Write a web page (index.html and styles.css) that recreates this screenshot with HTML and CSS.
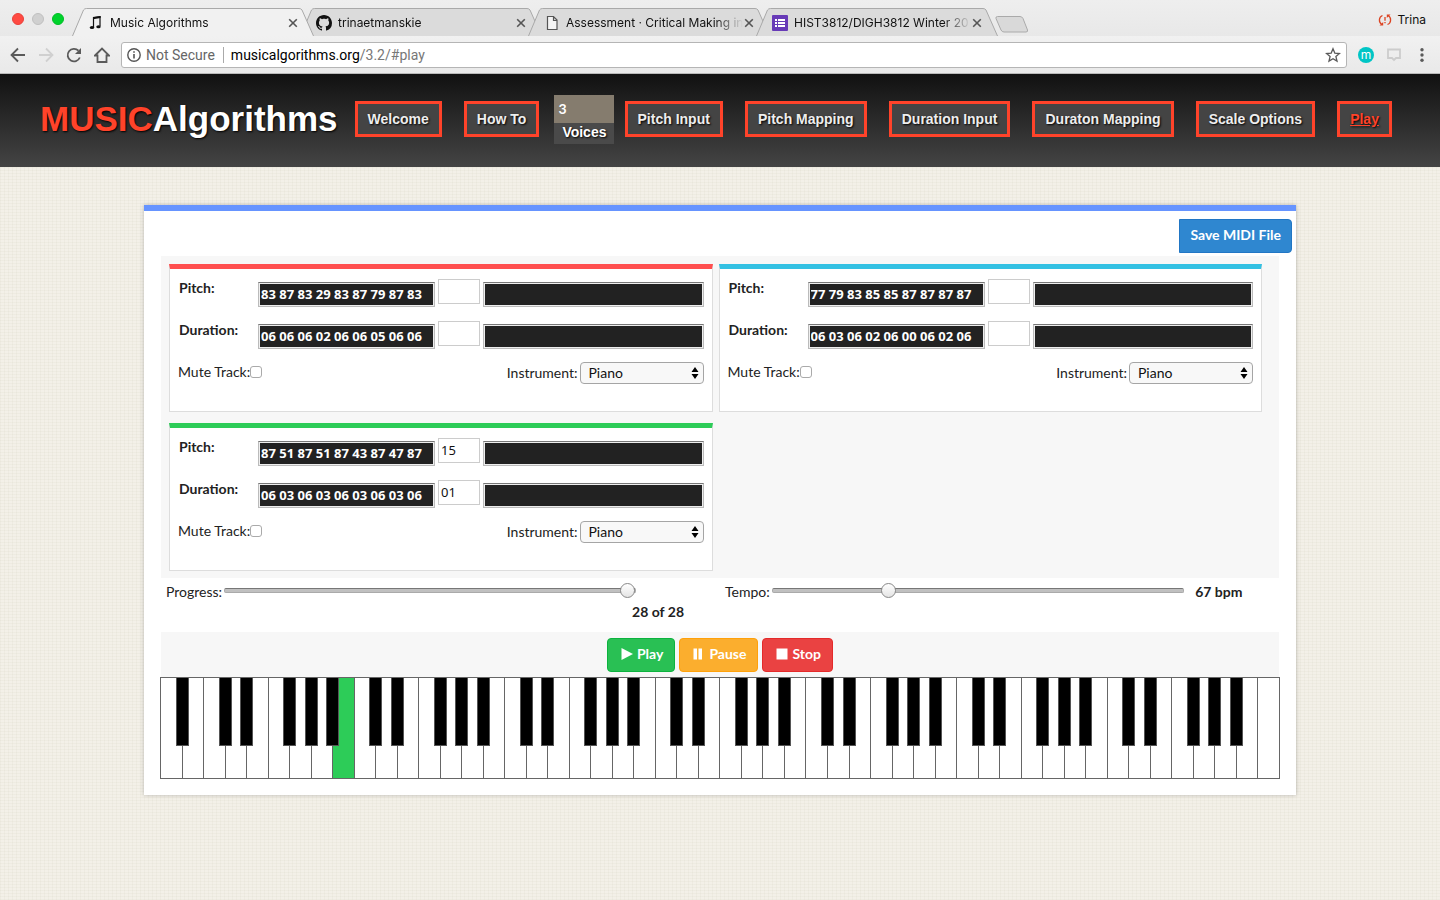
FILE: index.html
```html
<!DOCTYPE html>
<html lang="en">
<head>
<meta charset="utf-8">
<title>Music Algorithms</title>
<link rel="stylesheet" href="styles.css">
</head>
<body>
<div class="browser">
  <div class="tabstrip">
    <div class="lights"><span class="light light-red"></span><span class="light light-gray"></span><span class="light light-green"></span></div>
    <div class="tabs">
      <div class="tab tab-active">
        <svg class="tab-shape" viewBox="0 0 242 28" preserveAspectRatio="none"><path d="M0.500 28L11.500 2Q12.500 .5 14.500 .5H227Q229 .5 230 2L241.500 28"/></svg>
        <svg class="tab-icon" viewBox="0 0 16 16"><path d="M5.500 12V2.600l6.500-1V11" fill="none" stroke="#111" stroke-width="1.200"/><path d="M5 2.300l7.600-1.300v2L5 4.300z" fill="#111"/><ellipse cx="4" cy="12.600" rx="2.200" ry="1.500" fill="#111"/><ellipse cx="10.500" cy="11.800" rx="2.200" ry="1.500" fill="#111"/></svg>
        <span class="tab-title">Music Algorithms</span>
        <button class="tab-close" aria-label="Close tab"><svg viewBox="0 0 10 10"><path d="M1.200 1.200l7.600 7.600M8.800 1.200L1.200 8.800"/></svg></button>
      </div>
      <div class="tab">
        <svg class="tab-shape" viewBox="0 0 242 28" preserveAspectRatio="none"><path d="M0.500 28L11.500 2Q12.500 .5 14.500 .5H227Q229 .5 230 2L241.500 28"/></svg>
        <svg class="tab-icon" viewBox="0 0 16 16"><path fill="#111" fill-rule="evenodd" d="M8 0C3.580 0 0 3.580 0 8c0 3.540 2.290 6.530 5.470 7.590.4.070.55-.17.55-.38 0-.19-.01-.82-.01-1.490-2.010.37-2.530-.49-2.690-.94-.09-.23-.48-.94-.82-1.130-.28-.15-.68-.52-.01-.53.63-.01 1.080.58 1.230.82.72 1.210 1.870.87 2.330.66.070-.52.28-.87.51-1.070-1.780-.2-3.640-.89-3.640-3.950 0-.87.31-1.590.82-2.150-.08-.2-.36-1.020.08-2.120 0 0 .67-.21 2.200.82.64-.18 1.320-.27 2-.27s1.360.09 2 .27c1.530-1.040 2.200-.82 2.200-.82.44 1.100.16 1.920.08 2.120.51.56.82 1.270.82 2.150 0 3.070-1.870 3.750-3.650 3.950.29.25.54.73.54 1.480 0 1.070-.01 1.930-.01 2.200 0 .21.15.46.55.38A8.010 8.010 0 0016 8c0-4.420-3.580-8-8-8z"/></svg>
        <span class="tab-title">trinaetmanskie</span>
        <button class="tab-close" aria-label="Close tab"><svg viewBox="0 0 10 10"><path d="M1.200 1.200l7.600 7.600M8.800 1.200L1.200 8.800"/></svg></button>
      </div>
      <div class="tab">
        <svg class="tab-shape" viewBox="0 0 242 28" preserveAspectRatio="none"><path d="M0.500 28L11.500 2Q12.500 .5 14.500 .5H227Q229 .5 230 2L241.500 28"/></svg>
        <svg class="tab-icon" viewBox="0 0 16 16"><path d="M3.500 1.500h6l3.500 3.500v9.500H3.500zM9.500 1.500v4h3.500" fill="#f4f4f4" stroke="#555" stroke-width="1.200"/></svg>
        <span class="tab-title">Assessment · Critical Making in</span>
        <button class="tab-close" aria-label="Close tab"><svg viewBox="0 0 10 10"><path d="M1.200 1.200l7.600 7.600M8.800 1.200L1.200 8.800"/></svg></button>
      </div>
      <div class="tab">
        <svg class="tab-shape" viewBox="0 0 242 28" preserveAspectRatio="none"><path d="M0.500 28L11.500 2Q12.500 .5 14.500 .5H227Q229 .5 230 2L241.500 28"/></svg>
        <svg class="tab-icon" viewBox="0 0 16 16"><rect width="16" height="16" rx="1" fill="#673ab7"/><path d="M3 4h2v2H3zM6 4h7v2H6zM3 7h2v2H3zM6 7h7v2H6zM3 10h2v2H3zM6 10h7v2H6z" fill="#fff"/></svg>
        <span class="tab-title">HIST3812/DIGH3812 Winter 20</span>
        <button class="tab-close" aria-label="Close tab"><svg viewBox="0 0 10 10"><path d="M1.200 1.200l7.600 7.600M8.800 1.200L1.200 8.800"/></svg></button>
      </div>
      <button class="new-tab" aria-label="New tab"><svg viewBox="0 0 34 17"><path d="M2.500 .5H25Q27 .5 28 2.500L32.500 14Q33 16 31 16H9Q7 16 6 14L1 2.500Q.5 .5 2.500 .5z" fill="#d9d9d9" stroke="#aaa"/></svg></button>
    </div>
    <button class="profile"><svg viewBox="0 0 14 12"><g fill="none" stroke="#dc4423" stroke-width="1.300"><path d="M4.500 1.500C.5 3 .5 8.500 3.800 10.500M9.500 10.500C13.500 9 13.500 3.500 10.200 1.500"/><path d="M7 3v3.800M7 8v1.300"/></g><path d="M1.500 11.500h3.700V8zM12.500 .5H8.800V4z" fill="#dc4423"/></svg>Trina</button>
  </div>
  <div class="toolbar">
    <button class="tool" aria-label="Back"><svg viewBox="0 0 16 16"><path d="M15 8H2M8 1.500L1.500 8 8 14.500"/></svg></button>
    <button class="tool tool-off" aria-label="Forward"><svg viewBox="0 0 16 16"><path d="M1 8h13M8 1.500L14.500 8 8 14.500"/></svg></button>
    <button class="tool" aria-label="Reload"><svg viewBox="0 0 16 16"><path d="M13.800 10.500A6.300 6.300 0 1112.500 3.700"/><path class="solid" d="M15 1v6H9z"/></svg></button>
    <button class="tool" aria-label="Home"><svg viewBox="0 0 16 16"><path d="M1 8.500L8 1.500l7 7h-2.500V15h-9V8.500z"/></svg></button>
    <div class="omnibox">
      <svg class="info" viewBox="0 0 14 14"><circle cx="7" cy="7" r="6.200" fill="none" stroke="#555" stroke-width="1.400"/><path d="M7 6v4.500M7 3.200v1.600" stroke="#555" stroke-width="1.600"/></svg>
      <span class="secure">Not Secure</span>
      <span class="url"><b>musicalgorithms.org</b>/3.2/#play</span>
      <svg class="star" viewBox="0 0 16 16"><path d="M8 1.800l1.800 4.300 4.700.4-3.600 3 1.100 4.600L8 11.700l-4 2.400 1.100-4.600-3.600-3 4.700-.4z" fill="none" stroke="#5a5a5a" stroke-width="1.300"/></svg>
    </div>
    <span class="ext-m">m</span>
    <button class="tool ext-cast" aria-label="Comments"><svg viewBox="0 0 16 16"><path d="M2 2.500h12v8.500H10L8 13l-2-2H2z"/></svg></button>
    <button class="tool ext-menu" aria-label="Menu"><svg viewBox="0 0 16 16"><g fill="#5a5a5a" stroke="none"><circle cx="8" cy="2.800" r="1.700"/><circle cx="8" cy="8" r="1.700"/><circle cx="8" cy="13.200" r="1.700"/></g></svg></button>
  </div>
</div>

<header class="site-header">
  <h1 class="logo"><span class="logo-red">MUSIC</span>Algorithms</h1>
  <nav class="nav">
    <a class="nav-link" href="#welcome">Welcome</a>
    <a class="nav-link" href="#howto">How To</a>
    <div class="voices"><input class="voices-input" id="voices" type="text" value="3"><label class="voices-label" for="voices">Voices</label></div>
    <a class="nav-link" href="#pitch-input">Pitch Input</a>
    <a class="nav-link" href="#pitch-mapping">Pitch Mapping</a>
    <a class="nav-link" href="#duration-input">Duration Input</a>
    <a class="nav-link" href="#duration-mapping">Duraton Mapping</a>
    <a class="nav-link" href="#scale">Scale Options</a>
    <a class="nav-link nav-current" href="#play">Play</a>
  </nav>
</header>

<main class="panel">
  <div class="save-row"><button class="btn btn-save">Save MIDI File</button></div>
  <div class="tracks">
    <section class="track track-red">
      <div class="line"><label class="line-label" for="p1">Pitch:</label><input class="notes" id="p1" value="83 87 83 29 83 87 79 87 83" readonly><input class="now" aria-label="Current pitch"><input class="notes notes-rest" aria-label="Played pitches" readonly></div>
      <div class="line"><label class="line-label" for="d1">Duration:</label><input class="notes" id="d1" value="06 06 06 02 06 06 05 06 06" readonly><input class="now" aria-label="Current duration"><input class="notes notes-rest" aria-label="Played durations" readonly></div>
      <div class="options"><label class="mute">Mute Track:<input class="check" type="checkbox"></label><label class="instrument">Instrument: <select class="select"><option>Piano</option></select></label></div>
    </section>
    <section class="track track-cyan">
      <div class="line"><label class="line-label" for="p2">Pitch:</label><input class="notes" id="p2" value="77 79 83 85 85 87 87 87 87" readonly><input class="now" aria-label="Current pitch"><input class="notes notes-rest" aria-label="Played pitches" readonly></div>
      <div class="line"><label class="line-label" for="d2">Duration:</label><input class="notes" id="d2" value="06 03 06 02 06 00 06 02 06" readonly><input class="now" aria-label="Current duration"><input class="notes notes-rest" aria-label="Played durations" readonly></div>
      <div class="options"><label class="mute">Mute Track:<input class="check" type="checkbox"></label><label class="instrument">Instrument: <select class="select"><option>Piano</option></select></label></div>
    </section>
    <section class="track track-green">
      <div class="line"><label class="line-label" for="p3">Pitch:</label><input class="notes" id="p3" value="87 51 87 51 87 43 87 47 87" readonly><input class="now" value="15" aria-label="Current pitch"><input class="notes notes-rest" aria-label="Played pitches" readonly></div>
      <div class="line"><label class="line-label" for="d3">Duration:</label><input class="notes" id="d3" value="06 03 06 03 06 03 06 03 06" readonly><input class="now" value="01" aria-label="Current duration"><input class="notes notes-rest" aria-label="Played durations" readonly></div>
      <div class="options"><label class="mute">Mute Track:<input class="check" type="checkbox"></label><label class="instrument">Instrument: <select class="select"><option>Piano</option></select></label></div>
    </section>
  </div>
  <div class="sliders">
    <div class="slider-cell">
      <div class="slider-line"><label class="slider-label" for="progress">Progress:</label><input class="range" id="progress" type="range" min="0" max="28" value="28"></div>
      <output class="count" for="progress">28 of 28</output>
    </div>
    <div class="slider-cell">
      <div class="slider-line"><label class="slider-label tempo-label" for="tempo">Tempo:</label><input class="range" id="tempo" type="range" min="0" max="245" value="67"><output class="bpm" for="tempo">67 bpm</output></div>
    </div>
  </div>
  <div class="controls">
    <button class="btn btn-play"><svg viewBox="0 0 12 12"><path d="M0.500 0L12 6 .5 12z"/></svg>Play</button>
    <button class="btn btn-pause"><svg viewBox="0 0 12 12"><path d="M2.500 .5H6v11H2.500zM7.500 .5H11v11H7.500z"/></svg>Pause</button>
    <button class="btn btn-stop"><svg viewBox="0 0 12 12"><path d="M0.500 .5h11v11H.5z"/></svg>Stop</button>
  </div>
  <div class="keyboard" id="keyboard"></div>
</main>
<script src="keyboard.js"></script>
</body>
</html>
```
FILE: styles.css
```css
* { box-sizing: border-box; }
body {
  margin: 0;
  min-height: 100vh;
  font: 14px/18px Lato, sans-serif;
  color: #222;
  background-color: #f3f0e8;
  background-image:
    repeating-linear-gradient(0deg, rgba(180, 180, 150, .08) 0 1px, transparent 1px 3px),
    repeating-linear-gradient(90deg, rgba(180, 180, 150, .08) 0 1px, transparent 1px 4px);
}
button, input, select { font: inherit; color: inherit; margin: 0; }
button { border: 0; padding: 0; background: none; }
svg { display: block; }

/* Browser window */
.browser { font: 12px/20px Inter, sans-serif; color: #111; }
.tabstrip {
  display: flex;
  height: 36px;
  background: linear-gradient(#eee, #e8e8e8);
}
.lights { display: flex; gap: 8px; padding: 13px 0 0 12px; width: 72px; flex: none; }
.light { width: 12px; height: 12px; border-radius: 50%; }
.light-red { background: #ff4a42; border: 1px solid #e9413a; }
.light-gray { background: #d0d0d0; border: 1px solid #c0c0c0; }
.light-green { background: #00d32c; border: 1px solid #00bd26; }
.tabs { display: flex; flex: 1; min-width: 0; padding-top: 8px; }
.tab {
  position: relative;
  display: flex;
  align-items: center;
  gap: 6px;
  flex: 0 1 242px;
  min-width: 0;
  height: 28px;
  margin-right: -14px;
  padding: 2px 16px 0;
}
.tab-active { z-index: 1; }
.tab-shape { position: absolute; left: 0; top: 0; width: 100%; height: 28px; }
.tab-shape path { fill: #dbdbdb; stroke: #a9a9a9; }
.tab-active .tab-shape path { fill: #f1f1f1; }
.tab-icon { position: relative; width: 16px; height: 16px; flex: none; }
.tab-title {
  position: relative;
  flex: 1;
  min-width: 0;
  margin-right: -5px;
  overflow: hidden;
  white-space: nowrap;
  -webkit-mask-image: linear-gradient(to left, transparent, #000 28px);
  mask-image: linear-gradient(to left, transparent, #000 28px);
}
.tab-close { position: relative; width: 10px; height: 10px; flex: none; }
.tab-close path { stroke: #555; stroke-width: 1.6; }
.new-tab { width: 34px; height: 17px; margin: 8px 0 0 11px; }
.profile { display: flex; align-items: center; gap: 5px; padding: 0 14px 0 12px; height: 39px; }
.profile svg { width: 14px; height: 12px; }
.toolbar {
  display: flex;
  align-items: center;
  height: 38px;
  padding: 0 10px;
  background: linear-gradient(#f1f1f1, #e9e9e9);
  border-bottom: 1px solid #b9b9b9;
}
.tool { width: 16px; height: 16px; margin-right: 12px; flex: none; }
.tool path { fill: none; stroke: #5a5a5a; stroke-width: 1.8; }
.tool .solid { fill: #5a5a5a; stroke: none; }
.tool-off path { stroke: #d0d0d0; }
.omnibox {
  display: flex;
  align-items: center;
  flex: 1;
  min-width: 0;
  height: 26px;
  padding: 0 5px;
  margin: 0 11px 0 -1px;
  font: 14px/20px Roboto, sans-serif;
  background: #fff;
  border: 1px solid #b5b5b5;
  border-radius: 3px;
}
.info { width: 14px; height: 14px; margin-right: 5px; }
.secure { color: #666; padding-right: 8px; margin-right: 7px; line-height: 16px; border-right: 1px solid #aaa; white-space: nowrap; }
.url { flex: 1; color: #777; }
.url b { font-weight: 400; color: #000; }
.star { width: 16px; height: 16px; }
.ext-m { width: 16px; height: 16px; border-radius: 50%; background: #00c5c5; color: #fff; line-height: 15px; text-align: center; }
.tool.ext-cast { margin: 0 12px; }
.tool.ext-cast path { stroke: #ccc; }
.tool.ext-menu { margin: 0; }

/* Site header */
.site-header {
  display: flex;
  align-items: center;
  gap: 17px;
  min-height: 93px;
  padding: 0 48px 3px 40px;
  background: linear-gradient(#111, #444);
  font-family: "Liberation Sans", sans-serif;
  color: #fff;
}
.logo { margin: 0; font-size: 35px; line-height: 40px; font-weight: 700; text-shadow: 1px 1px 2px #000; }
.logo-red { color: #ff432a; }
.nav { display: flex; flex: 1; align-items: center; justify-content: space-between; }
.nav-link {
  padding: 6px 10px;
  border: 3px solid #ff432a;
  background: #444;
  color: #eee;
  font-size: 14px;
  font-weight: 700;
  text-decoration: none;
  text-shadow: 1px 1px 2px #000;
  white-space: nowrap;
}
.nav-current { color: #ff432a; text-decoration: underline; }
.voices { display: flex; flex-direction: column; width: 60px; margin: 0 -12px 0 -7px; background: #4a4a4a; }
.voices-input { width: 100%; height: 28px; padding: 0 4px; border: 0; background: #857c6e; color: #fff; font-family: Lato, sans-serif; font-weight: 700; }
.voices-label { height: 21px; font-weight: 700; text-align: center; text-shadow: 1px 1px 2px #000; }

/* Player panel */
.panel {
  width: 80%;
  margin: 38px auto 0;
  padding: 8px 16px 16px;
  background: #fff;
  border-top: 6px solid #6694ff;
  box-shadow: 0 0 4px rgba(0, 0, 0, .25);
}
.save-row { display: flex; justify-content: flex-end; margin: 0 -12px 3px 0; }
.btn {
  display: flex;
  align-items: center;
  gap: 4px;
  height: 34px;
  padding: 0 10px 2px;
  border: 1px solid;
  border-radius: 4px;
  color: #fff;
  font-weight: 700;
}
.btn svg { width: 12px; height: 12px; fill: #fff; }
.btn-save { background: #2f87d0; border-color: #2176c4; border-radius: 0 4px 4px 0; }
.tracks {
  display: grid;
  grid-template-columns: 1fr 1fr;
  gap: 11px 6px;
  margin: 0 1px;
  padding: 8px 17px 7px 8px;
  background: #f7f7f7;
}
.track { padding: 10px 8px 27px; background: #fff; border: 1px solid #ddd; border-top: 5px solid; }
.track-red { border-top-color: #ff4f4f; }
.track-cyan { border-top-color: #33c1e3; }
.track-green { border-top-color: #2dcc58; }
.line { display: flex; gap: 3px; align-items: flex-start; height: 28px; margin-bottom: 14px; }
.line-label { width: 77px; padding-left: 1px; font-weight: 700; flex: none; }
.notes {
  width: 177px;
  height: 25px;
  margin-top: 3px;
  padding: 0 2px 2px;
  flex: none;
  background: #222;
  color: #fff;
  font: 700 13px/18px "Noto Sans", sans-serif;
  border: 1px solid #bbb;
  border-top-color: #777;
  border-radius: 0;
  box-shadow: inset 0 0 0 1px #eee;
}
.notes-rest { flex: 1; min-width: 0; }
.now { width: 42px; height: 25px; padding: 0 2px 2px; border: 1px solid #ccc; background: #fff; color: #111; flex: none; font: 13px/18px "Noto Sans", sans-serif; }
.options { display: flex; justify-content: space-between; align-items: flex-start; height: 21px; }
.mute { display: flex; align-items: center; gap: 0; }
.check { appearance: none; width: 12px; height: 12px; border: 1px solid #aaa; border-radius: 3px; background: #fff; }
.instrument { display: flex; align-items: center; gap: 2px; margin-top: -1px; }
.select {
  appearance: none;
  width: 124px;
  height: 22px;
  padding: 0 8px 1px;
  border: 1px solid #a5a5a5;
  border-radius: 4px;
  color: #111;
  background: #f8f8f8 url("data:image/svg+xml,%3Csvg xmlns='http://www.w3.org/2000/svg' viewBox='0 0 8 12'%3E%3Cpath d='M4 0l3.500 5h-7zM4 12l3.500-5h-7z'/%3E%3C/svg%3E") no-repeat right 4px center / 8px 12px;
}
.sliders { display: grid; grid-template-columns: 1fr 1fr; min-height: 54px; padding: 5px 0 0 6px; }
.slider-line { display: flex; align-items: flex-start; }
.slider-label { width: 58px; flex: none; }
.tempo-label { width: 47px; margin-left: 2px; }
.range { appearance: none; width: 74%; height: 15px; background: none; }
.range::-webkit-slider-runnable-track { height: 5px; background: #c0c0c0; border: 1px solid #aaa; border-top-color: #777; border-radius: 2px; }
.range::-webkit-slider-thumb { appearance: none; width: 15px; height: 15px; margin-top: -6px; border: 1px solid #888; border-radius: 50%; background: linear-gradient(#fff, #e4e4e4); }
.count { display: block; width: 93%; margin-top: 2px; font-weight: 700; text-align: right; }
.bpm { margin-left: 11px; font-weight: 700; white-space: nowrap; }
.controls { display: flex; justify-content: center; gap: 4px; margin: 0 1px; padding: 6px 0 5px; background: #f7f7f7; }
.btn-play { background: #29c054; border-color: #0cb33e; padding: 0 11px 2px 13px; }
.btn-pause { background: #fbae2e; border-color: #ffa10a; padding: 0 11px 2px; gap: 6px; }
.btn-stop { background: #ea4242; border-color: #e42a2a; padding: 0 11px 2px 13px; }

.keyboard { display: flex; height: 102px; border: 1px solid #666; border-left: 0; }
.key { position: relative; flex: 1; border-left: 1px solid #666; }
.white { display: block; width: 100%; height: 100%; background: #fff; }
.white-on { background: #2dcc58; }
.black { position: absolute; top: 0; right: -7px; z-index: 1; width: 13px; height: 68px; background: #000; border: 1px solid #555; border-top: 0; }
```
FILE: keyboard.js
```js
// 52 white keys from A0 to C8; B and E have no sharp above them.
const keyboard = document.getElementById("keyboard");
const names = ["A", "B", "C", "D", "E", "F", "G"];
const activeKey = 8;
for (let i = 0; i < 52; i++) {
  const name = names[i % 7];
  const key = document.createElement("div");
  key.className = "key";
  const white = document.createElement("button");
  white.className = i === activeKey ? "white white-on" : "white";
  white.setAttribute("aria-label", name);
  key.append(white);
  if (name !== "B" && name !== "E" && i < 51) {
    const black = document.createElement("button");
    black.className = "black";
    black.setAttribute("aria-label", name + " sharp");
    key.append(black);
  }
  keyboard.append(key);
}
```
